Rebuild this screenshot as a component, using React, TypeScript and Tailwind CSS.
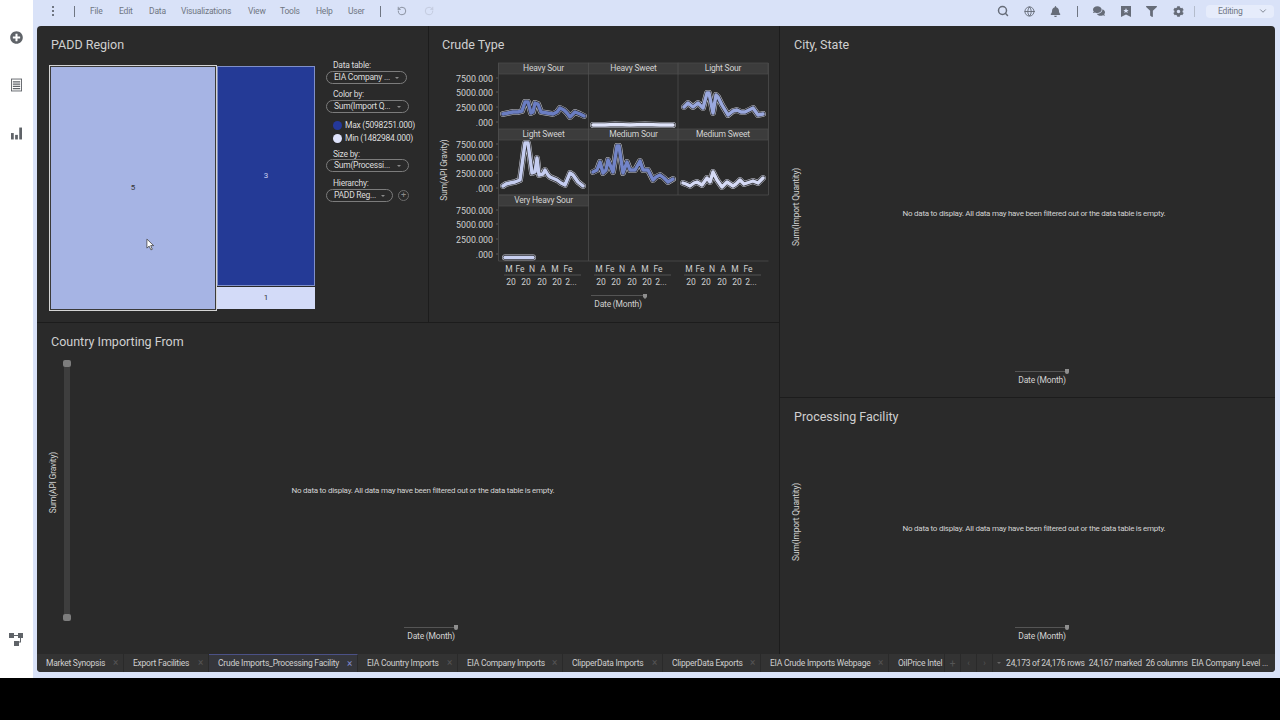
import { ChevronDown, Globe, RotateCcw, RotateCw, Search } from "lucide-react"
import { FaBell, FaCog, FaComments, FaFilter, FaPlusCircle } from "react-icons/fa"

const font = "font-['Roboto',sans-serif]"

const menus = [
  { label: "File", w: "w-[29px]" },
  { label: "Edit", w: "w-[30px]" },
  { label: "Data", w: "w-[32px]" },
  { label: "Visualizations", w: "w-[67px]" },
  { label: "View", w: "w-[32px]" },
  { label: "Tools", w: "w-[36px]" },
  { label: "Help", w: "w-[32px]" },
  { label: "User", w: "w-[32px]" },
]

const tabs = [
  { name: "Market Synopsis", w: "w-[87px]" },
  { name: "Export Facilities", w: "w-[85px]" },
  { name: "Crude Imports_Processing Facility", w: "w-[149px]", active: true },
  { name: "EIA Country Imports", w: "w-[100px]" },
  { name: "EIA Company Imports", w: "w-[105px]" },
  { name: "ClipperData Imports", w: "w-[100px]" },
  { name: "ClipperData Exports", w: "w-[98px]" },
  { name: "EIA Crude Imports Webpage", w: "w-[128px]" },
]

// trellis panels, coordinates are page pixels
const series = [
  { title: "Heavy Sour", x: 498.5, y: 63, color: "#6a7dc2", pts: "503,114 508,113 513,112 518,112 522,111 525,102 528,102 531,113 533,112 535,103 538,104 541,112 547,113 553,114 557,112 560,108 564,110 567,113 570,117 575,112 580,114 584,116" },
  { title: "Heavy Sweet", x: 588.5, y: 63, color: "#e0e4fa", pts: "593,125 605,125 615,124.5 630,125 645,124.5 660,125 673,125" },
  { title: "Light Sour", x: 678, y: 63, color: "#9aa8de", pts: "684,107 688,103 693,107 698,103 701,106 703,108 707,93 709,93 713,113 716,95 718,97 722,105 725,110 728,115 733,111 737,110 741,112 745,112 749,110 753,108 758,115 763,114" },
  { title: "Light Sweet", x: 498.5, y: 129, color: "#c5cdf0", pts: "503,186 506,184 510,183 515,182 520,180 525,143 528,143 532,173 535,172 537,158 539,175 543,174 545,170 548,175 550,177 557,180 561,183 565,185 570,173 573,175 578,182 583,186" },
  { title: "Medium Sour", x: 588.5, y: 129, color: "#7284c8", pts: "593,172 597,170 600,162 603,173 606,170 608,160 613,172 617,146 619,146 623,173 627,162 630,170 635,170 640,161 643,170 648,170 653,180 656,177 660,175 664,178 668,182 673,179" },
  { title: "Medium Sweet", x: 678, y: 129, color: "#d5daf5", pts: "683,183 686,184 690,186 694,183 697,182 702,185 707,178 710,182 713,172 717,180 722,187 727,182 733,186 736,184 740,180 744,184 747,183 753,181 758,183 763,178" },
  { title: "Very Heavy Sour", x: 498.5, y: 195, color: "#c8cff0", pts: "505,257.5 533,257.5" },
]

const yTicks = ["7500.000", "5000.000", "2500.000", ".000"]
const yRows = [
  [79, 93, 108, 123],
  [145, 158, 174, 189],
  [211, 225, 240, 255],
]
const xCols = [0, 90, 180]

function CrudeChart() {
  return (
    <svg viewBox="429 62 350 260" className={`w-[350px] h-[260px] ${font}`}>
      {series.map((s) => (
        <g key={s.title}>
          <rect x={s.x} y={s.y} width="90" height="11" fill="#3c3c3c" stroke="#4c4c4c" strokeWidth="0.7" />
          <text x={s.x + 45} y={s.y + 8} fontSize="8.5" letterSpacing="-0.2" fill="#d2d2d2" textAnchor="middle">{s.title}</text>
          <polyline points={s.pts} fill="none" stroke="#c9ccd8" strokeWidth="5.8" strokeLinejoin="round" strokeLinecap="round" />
          <polyline points={s.pts} fill="none" stroke="#2f2f33" strokeWidth="4.8" strokeLinejoin="round" strokeLinecap="round" />
          <polyline points={s.pts} fill="none" stroke={s.color} strokeWidth="3.4" strokeLinejoin="round" strokeLinecap="round" />
        </g>
      ))}
      {/* frame lines */}
      <path d="M498.5 63V261M588.5 63V261M678 63V195M768.5 63V195M498.5 195H768.5M498.5 261H768.5" fill="none" stroke="#4c4c4c" strokeWidth="0.8" />
      {yRows.map((row, i) =>
        row.map((y, j) => (
          <g key={`${i}-${j}`}>
            <text x="493" y={y + 3} fontSize="8.8" fill="#cfcfcf" textAnchor="end">{yTicks[j]}</text>
            <path d={`M496 ${y - 1}H498`} stroke="#666" strokeWidth="0.8" />
          </g>
        ))
      )}
      <text transform="translate(447 170) rotate(-90)" fontSize="8.5" letterSpacing="-0.2" fill="#cfcfcf" textAnchor="middle">Sum(API Gravity)</text>
      {xCols.map((dx) => (
        <g key={dx} fontSize="8.5" fill="#cfcfcf" textAnchor="middle">
          {["M", "Fe", "N", "A", "M", "Fe"].map((t, i) => (
            <text key={i} x={[509, 520, 532, 543, 555, 568][i] + dx} y="272">{t}</text>
          ))}
          <path d="M504 275H581" transform={`translate(${dx} 0)`} stroke="#5e5e5e" strokeWidth="0.8" />
          {["20", "20", "20", "20", "2..."].map((t, i) => (
            <text key={i} x={[511, 526, 542, 557, 571][i] + dx} y="285">{t}</text>
          ))}
        </g>
      ))}
      <path d="M591 295.5H643" stroke="#555" strokeWidth="1" />
      <path d="M643 294h4v3l-2 2l-2 -2z" fill="#8e8e8e" />
      <text x="618" y="307" fontSize="8.5" letterSpacing="-0.2" fill="#cfcfcf" textAnchor="middle">Date (Month)</text>
    </svg>
  )
}

function Pill({ label, w }: { label: string; w: string }) {
  return (
    <div className={`${w} h-[13px] rounded-full border border-[#7c7c7c] flex items-center justify-between pl-[7px] pr-[7px] text-[#dcdcdc] leading-none`}>
      <span>{label}</span>
      <span className="w-0 h-0 border-l-[2px] border-r-[2px] border-t-[2px] border-l-transparent border-r-transparent border-t-[#8a8a8a]" />
    </div>
  )
}

function PaddPanel() {
  return (
    <div className="w-[392px] h-[296px] pl-[14px] border-r border-[#1c1c1c] shrink-0">
      <div className="h-[34px] pt-[10px] text-[12.5px] leading-[18px] text-[#d0d0d0]">PADD Region</div>
      <div className="flex">
        {/* treemap */}
        <div className="mt-[5px] -ml-[2px] flex w-[266px] h-[246px] shrink-0">
          <div className="w-[168px] h-[246px] border border-[#d4d4d4] p-[1px] bg-[#3a3a3a]">
            <div className="h-full bg-[#a6b4e4] flex items-center justify-center text-[8px] text-[#333]">
              <span>5</span>
            </div>
          </div>
          <div className="w-[98px] flex flex-col pt-[1px]">
            <div className="h-[220px] bg-[#243a96] border border-[#7f8fc9] flex items-center justify-center text-[8px] text-[#c8cff0]">
              <span className="-mt-[1px]">3</span>
            </div>
            <div className="h-[22px] mt-[1px] bg-[#d3dbf8] flex items-center justify-center text-[8px] text-[#333]">1</div>
          </div>
        </div>
        {/* legend */}
        <div className="ml-[11px] text-[8.5px] tracking-[-0.25px] text-[#dcdcdc] leading-none">
          <div className="h-[11px] pl-[7px] flex items-center">Data table:</div>
          <Pill label="EIA Company ..." w="w-[81px]" />
          <div className="h-[11px] mt-[5px] pl-[7px] flex items-center">Color by:</div>
          <Pill label="Sum(Import Q..." w="w-[83px]" />
          <div className="mt-[6px] pl-[7px] h-[13px] flex items-center gap-[3px] whitespace-nowrap">
            <span className="w-[9px] h-[9px] rounded-full bg-[#24389a]" />
            Max (5098251.000)
          </div>
          <div className="pl-[7px] h-[13px] flex items-center gap-[3px] whitespace-nowrap">
            <span className="w-[9px] h-[9px] rounded-full bg-[#dfe3fb]" />
            Min (1482984.000)
          </div>
          <div className="h-[10px] mt-[4px] pl-[7px] flex items-center">Size by:</div>
          <Pill label="Sum(Processi..." w="w-[83px]" />
          <div className="h-[11px] mt-[6px] pl-[7px] flex items-center">Hierarchy:</div>
          <div className="flex items-center gap-[4px]">
            <Pill label="PADD Reg..." w="w-[67px]" />
            <span className="w-[11px] h-[11px] rounded-full border border-[#6c6c6c] flex items-center justify-center text-[9px] text-[#8a8a8a] leading-none ml-[1px]">+</span>
          </div>
        </div>
      </div>
    </div>
  )
}

function DateAxis({ low }: { low?: boolean }) {
  return (
    <div className={`flex flex-col items-center ml-[16px] ${low ? "pt-[5px]" : "pt-[4px]"}`}>
      <div className="w-[54px] flex items-center h-[4px]">
        <div className="flex-1 h-px bg-[#555]" />
        <div className="w-[4px] h-[5px] bg-[#8e8e8e] rounded-b-sm" />
      </div>
      <div className="text-[8.5px] tracking-[-0.2px] leading-[10px] text-[#d2d2d2] mt-[2px]">Date (Month)</div>
    </div>
  )
}

function EmptyPanel({ title, label, className, country, low }: { title: string; label: string; className: string; country?: boolean; low?: boolean }) {
  return (
    <div className={`flex flex-col ${className}`}>
      <div className="h-[38px] shrink-0 pl-[14px] pt-[10px] text-[12.5px] leading-[18px] text-[#d0d0d0]">{title}</div>
      <div className={`flex-1 flex ${country ? "pr-[8px]" : "pr-[9px]"}`}>
        {country ? (
          <div className="w-[38px] flex shrink-0 pl-[11px]">
            <div className="w-[10px] flex items-center justify-center pb-[49px]">
              <span className="[writing-mode:vertical-rl] rotate-180 text-[8.5px] tracking-[-0.2px] leading-[10px] text-[#d2d2d2] whitespace-nowrap">{label}</span>
            </div>
            <div className="flex flex-col items-center w-[9px] ml-[4px] -mt-[1px]">
              <div className="w-[8px] h-[7px] rounded-[2px] bg-[#7d7d7d] shrink-0" />
              <div className="w-[6px] h-[247px] bg-[#3e3e3e]" />
              <div className="w-[8px] h-[7px] rounded-[2px] bg-[#7d7d7d] shrink-0" />
            </div>
          </div>
        ) : (
          <div className="w-[22px] flex items-center justify-center shrink-0 pl-[10px] pb-[47px]">
            <span className="[writing-mode:vertical-rl] rotate-180 text-[8.5px] tracking-[-0.2px] leading-[10px] text-[#d2d2d2] whitespace-nowrap">{label}</span>
          </div>
        )}
        <div className="flex-1 flex flex-col">
          <div className="flex-1 flex items-center justify-center text-[8px] tracking-[-0.26px] text-[#d2d2d2]">
            No data to display. All data may have been filtered out or the data table is empty.
          </div>
          <div className="h-[33px] shrink-0">
            <DateAxis low={low} />
          </div>
        </div>
      </div>
    </div>
  )
}

function TabClose({ active }: { active?: boolean }) {
  return <span className={`text-[10px] leading-none ${active ? "text-[#7f88c9]" : "text-[#555]"}`}>×</span>
}

export default function App() {
  return (
    <div className={`w-[1280px] h-[720px] bg-black overflow-hidden ${font}`}>
      <div className="h-[678px] flex relative">
        {/* left rail */}
        <div className="w-[33px] shrink-0 bg-white flex flex-col items-center text-[#5f6368] pt-[31px] pr-[1px]">
          <FaPlusCircle size={13} />
          <svg viewBox="0 0 12 14" className="w-[11px] h-[14px] mt-[34px]" fill="none" stroke="#5f6368">
            <rect x="0.5" y="0.5" width="11" height="13" fill="#fff" />
            <path d="M2 3.5H10M2 6H10M2 8.5H10M2 11H10" strokeWidth="1.4" />
          </svg>
          <svg viewBox="0 0 12 13" className="w-[11px] h-[13px] mt-[35px]" fill="#5f6368">
            <rect x="0" y="6" width="3" height="7" />
            <rect x="4.5" y="8" width="3" height="5" />
            <rect x="9" y="0" width="3" height="13" />
          </svg>
          <svg viewBox="0 0 14 13" className="w-[14px] h-[13px] mt-auto mb-[32px]" fill="#5f6368">
            <rect x="0" y="0" width="5" height="5" />
            <rect x="9" y="0" width="5" height="5" />
            <rect x="5" y="8" width="5" height="5" />
            <path d="M5 2h4v1H5zM11 5h1v4.5H10v-1h1z" />
          </svg>
        </div>

        <div className="w-[1247px] shrink-0 bg-[#d9e2f8] flex flex-col">
          {/* toolbar */}
          <div className="h-[26px] pb-[4px] flex items-center text-[#6f7682] text-[8.5px] tracking-[-0.2px] shrink-0">
            <div className="w-[41px] flex justify-end pr-[20px]">
              <span className="flex flex-col gap-[2px]">
                <span className="w-[2px] h-[2px] bg-[#6f7682]" />
                <span className="w-[2px] h-[2px] bg-[#6f7682]" />
                <span className="w-[2px] h-[2px] bg-[#6f7682]" />
              </span>
            </div>
            <div className="w-px h-[11px] bg-[#6f7682]" />
            <div className="flex ml-[15px]">
              {menus.map((m) => (
                <span key={m.label} className={m.w}>{m.label}</span>
              ))}
            </div>
            <div className="w-px h-[11px] bg-[#6f7682]" />
            <RotateCcw size={10} className="ml-[16px] text-[#7c8390]" />
            <RotateCw size={10} className="ml-[17px] text-[#bfc7da]" />
            <div className="ml-auto flex items-center text-[#666c78]">
              <Search size={12} strokeWidth={3} />
              <Globe size={11} className="ml-[15px]" />
              <FaBell size={11} className="ml-[15px]" />
              <div className="w-px h-[11px] bg-[#6f7682] ml-[16px]" />
              <FaComments size={12} className="ml-[15px]" />
              <svg viewBox="0 0 10 11" className="w-[10px] h-[11px] ml-[16px]" fill="#666c78">
                <path d="M0 0H10V11L5 8.5L0 11Z" />
                <path d="M5 2L5.8 4H7.6L6.2 5.2L6.7 7L5 6L3.3 7L3.8 5.2L2.4 4H4.2Z" fill="#d9e2f8" />
              </svg>
              <FaFilter size={11} className="ml-[15px]" />
              <FaCog size={11} className="ml-[16px]" />
              <div className="w-px h-[11px] bg-[#b4bccc] ml-[10px]" />
              <div className="ml-[11px] mr-[6px] w-[68px] h-[13px] bg-[#e6ecfb] rounded-sm flex items-center justify-between pl-[12px] pr-[6px] text-[#6f7682]">
                Editing
                <ChevronDown size={10} />
              </div>
            </div>
          </div>

          {/* workspace */}
          <div className="ml-[4px] w-[1238px] h-[646px] bg-[#2a2a2a] rounded-sm flex flex-col shrink-0">
            <div className="flex h-[628px]">
              <div className="w-[743px] shrink-0 flex flex-col border-r border-[#1c1c1c]">
                <div className="flex h-[297px] border-b border-[#1c1c1c] shrink-0">
                  <PaddPanel />
                  <div className="w-[350px] shrink-0">
                    <div className="h-[36px] pl-[13px] pt-[10px] text-[12.5px] leading-[18px] text-[#d0d0d0]">Crude Type</div>
                    <CrudeChart />
                  </div>
                </div>
                <EmptyPanel title="Country Importing From" label="Sum(API Gravity)" className="h-[331px]" country />
              </div>
              <div className="flex-1 min-w-0 flex flex-col">
                <EmptyPanel title="City, State" label="Sum(Import Quantity)" className="h-[372px] border-b border-[#1c1c1c]" low />
                <EmptyPanel title="Processing Facility" label="Sum(Import Quantity)" className="h-[256px]" />
              </div>
            </div>

            {/* tabs + status */}
            <div className="h-[18px] bg-[#333333] flex items-center text-[8.5px] tracking-[-0.24px] text-[#cfcfcf] rounded-b-sm whitespace-nowrap shrink-0">
              {tabs.map((t) => (
                <div
                  key={t.name}
                  className={`${t.w} h-full shrink-0 flex items-center justify-between pl-[9px] pr-[5px] border-r border-[#2a2a2a] ${t.active ? "bg-[#35363c] border-t border-t-[#4b5186]" : ""}`}
                >
                  <span>{t.name}</span>
                  <TabClose active={t.active} />
                </div>
              ))}
              <div className="w-[55px] h-full shrink-0 pl-[9px] flex items-center">OilPrice Intel</div>
              <div className="w-[16px] h-full shrink-0 flex items-center justify-center text-[#555] text-[10px] border-l border-[#2a2a2a]">+</div>
              <div className="w-[16px] h-full shrink-0 flex items-center justify-center text-[#555] border-l border-[#2a2a2a]">‹</div>
              <div className="w-[16px] h-full shrink-0 flex items-center justify-center text-[#555] border-l border-[#2a2a2a]">›</div>
              <div className="flex-1 h-full flex items-center justify-end pr-[7px] border-l border-[#2a2a2a] gap-[4px]">
                <span className="w-0 h-0 border-l-[2px] border-r-[2px] border-t-[2px] border-l-transparent border-r-transparent border-t-[#666] mr-[1px]" />
                <span>24,173 of 24,176 rows</span>
                <span>24,167 marked</span>
                <span>26 columns</span>
                <span>EIA Company Level ...</span>
              </div>
            </div>
          </div>
        </div>

        {/* mouse pointer */}
        <svg viewBox="0 0 10 14" className="absolute left-[146px] top-[238px] w-[9px] h-[13px]">
          <path d="M1 1L1 11L3.5 8.8L5.5 13L7 12.3L5.2 8.2L8.5 8.2Z" fill="#fff" stroke="#333" strokeWidth="0.8" />
        </svg>
      </div>
    </div>
  )
}
